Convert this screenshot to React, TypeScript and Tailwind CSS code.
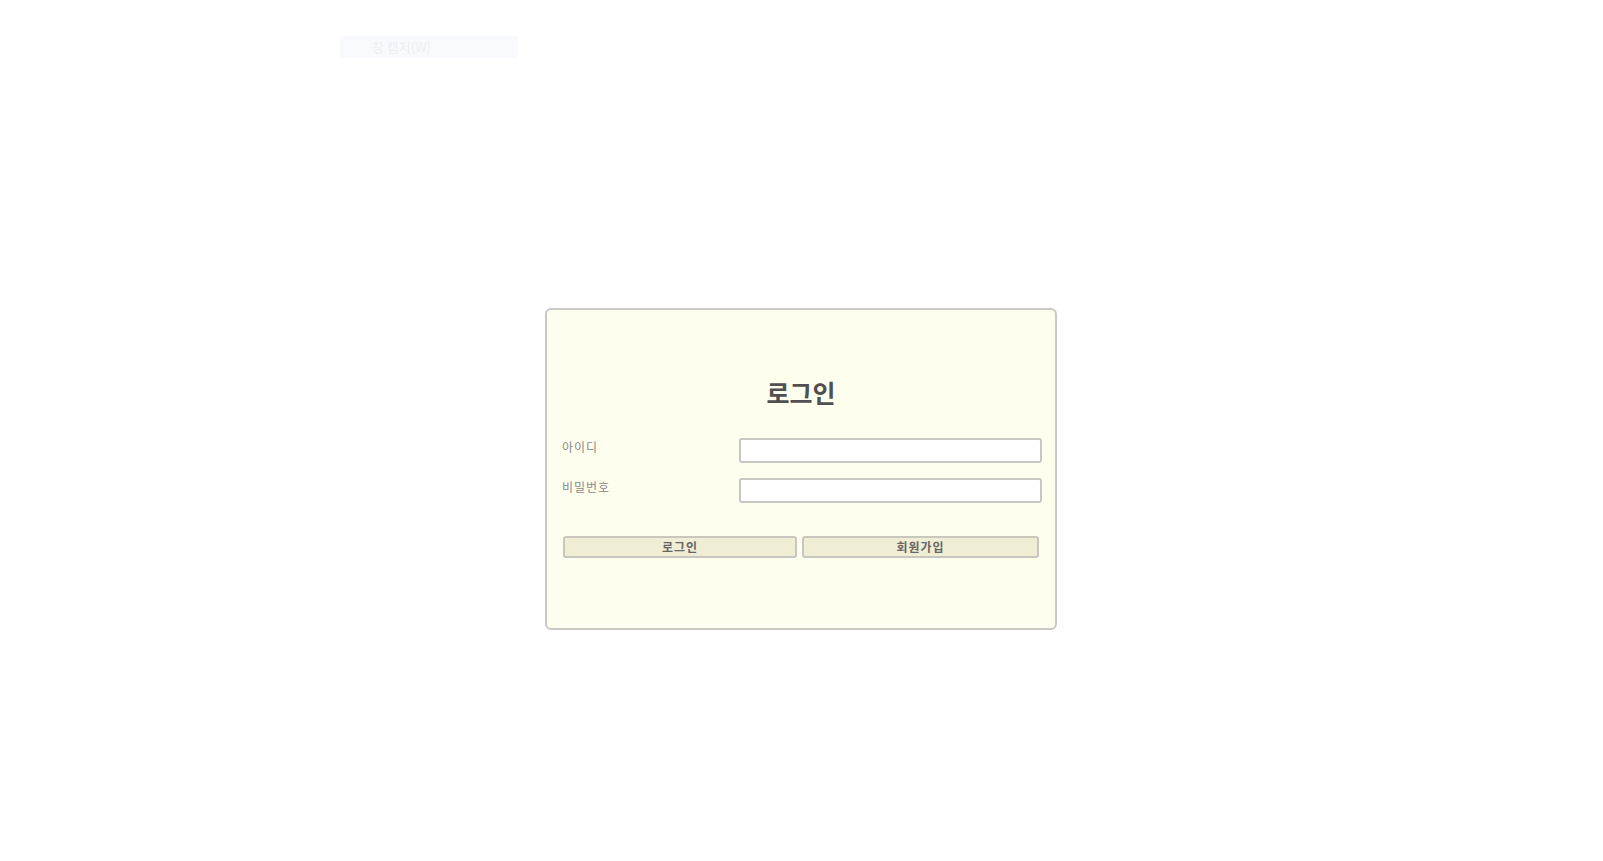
import React from 'react';

export default function App() {
  return (
    <div className="w-full min-h-[861px] bg-white font-['Noto_Sans_CJK_KR','Noto_Sans',sans-serif]">
      {/* faded capture hint */}
      <div className="pt-[36px] pl-[340px]">
        <div className="w-[178px] h-[22px] bg-[#f9fafd] flex items-center pl-[32px] text-[13px] text-[#eceef3]">
          창 캡처(W)
        </div>
      </div>

      <div className="mt-[250px] ml-[545px] w-[512px] border-2 border-[#c9c8c3] rounded-[6px] bg-[#fefeef] pt-[66px] pb-[70px]">
        <h1 className="text-center text-[25px] leading-[32px] font-bold text-[#505050] mb-[30px]">로그인</h1>

        <div className="pl-[15px] pr-[13px] flex flex-col gap-[15px]">
          <div className="flex items-start">
            <label className="w-[177px] pt-[1px] text-[12px] leading-[16px] tracking-[1px] text-[#8a8a8a]">아이디</label>
            <input
              type="text"
              className="flex-1 h-[25px] bg-white border-2 border-[#c8c7c2] rounded-[3px] outline-none px-1 text-[13px]"
            />
          </div>
          <div className="flex items-start">
            <label className="w-[177px] pt-[1px] text-[12px] leading-[16px] tracking-[1px] text-[#8a8a8a]">비밀번호</label>
            <input
              type="password"
              className="flex-1 h-[25px] bg-white border-2 border-[#c8c7c2] rounded-[3px] outline-none px-1 text-[13px]"
            />
          </div>
        </div>

        <div className="px-[16px] mt-[33px] flex gap-[5px]">
          <button className="w-[234px] h-[22px] bg-[#f0edd5] border-2 border-[#c8c6bd] rounded-[3px] text-[12px] font-bold tracking-[1px] text-[#666666] leading-none">
            로그인
          </button>
          <button className="flex-1 h-[22px] bg-[#f0edd5] border-2 border-[#c8c6bd] rounded-[3px] text-[12px] font-bold tracking-[1px] text-[#666666] leading-none">
            회원가입
          </button>
        </div>
      </div>
    </div>
  );
}
